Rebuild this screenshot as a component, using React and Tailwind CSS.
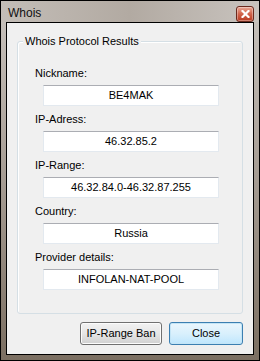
import React from 'react';

const fields = [
  { label: 'Nickname:', value: 'BE4MAK' },
  { label: 'IP-Adress:', value: '46.32.85.2' },
  { label: 'IP-Range:', value: '46.32.84.0-46.32.87.255' },
  { label: 'Country:', value: 'Russia' },
  { label: 'Provider details:', value: 'INFOLAN-NAT-POOL' },
];

export default function App() {
  return (
    <div
      className="w-[260px] h-[361px] border border-black flex flex-col bg-gradient-to-b from-[#c9c4bf] via-[#a59c93] to-[#7b6f62] text-black"
      style={{ fontFamily: '"Liberation Sans", Arial, sans-serif' }}
    >
      {/* Title bar */}
      <div className="h-[21px] flex items-center justify-between pl-[7px] pr-[5px] bg-gradient-to-r from-[#c3bdb7] via-[#b2aaa2] to-[#c8c3be]">
        <span className="text-[12px] leading-[14px] pt-[2px] text-[#111]">Whois</span>
        <button className="mt-[4px] w-[18px] h-[16px] rounded-[3px] border border-[#6b2a1e] bg-gradient-to-b from-[#e9a996] via-[#d0624a] to-[#b8391f] flex items-center justify-center shadow-[inset_0_0_0_1px_rgba(255,255,255,0.35)]">
          <svg width="9" height="8" viewBox="0 0 9 8">
            <path d="M1.5 1 L7.5 7 M7.5 1 L1.5 7" stroke="#fff" strokeWidth="2.2" strokeLinecap="square" />
          </svg>
        </button>
      </div>

      {/* Client area */}
      <div className="flex-1 mx-[5px] mb-[5px] border border-black bg-[#f0f0f0] flex flex-col text-[11px]">
        <div className="relative mt-[18px] mx-[10px] border border-[#d5dfe5] rounded-[3px] shadow-[inset_1px_1px_0_#fff] pt-[23px] pb-[23px] flex flex-col gap-[5px]">
          <span className="absolute -top-[9px] left-[5px] px-[2px] bg-[#f0f0f0] leading-[16px]">
            Whois Protocol Results
          </span>
          {fields.map(f => (
            <div key={f.label} className="flex flex-col">
              <div className="h-[16px] leading-[16px] pl-[17px] mb-[4px]">{f.label}</div>
              <div className="ml-[25px] w-[176px] h-[21px] bg-white border border-[#e3e9ef] border-t-[#abadb3] flex items-center justify-center">
                {f.value}
              </div>
            </div>
          ))}
        </div>

        <div className="mt-[8px] mr-[10px] flex justify-end gap-[7px]">
          <button className="w-[82px] h-[23px] rounded-[3px] border border-[#707070] bg-gradient-to-b from-[#f2f2f2] via-[#e6e6e6] to-[#d0d0d0] shadow-[inset_0_0_0_1px_#fcfcfc]">
            IP-Range Ban
          </button>
          <button className="w-[74px] h-[23px] rounded-[3px] border border-[#3c7fb1] bg-gradient-to-b from-[#eaf6fd] via-[#d9f0fc] to-[#bee6fd] shadow-[inset_0_0_0_1px_#c4e5f6]">
            Close
          </button>
        </div>
      </div>
    </div>
  );
}
